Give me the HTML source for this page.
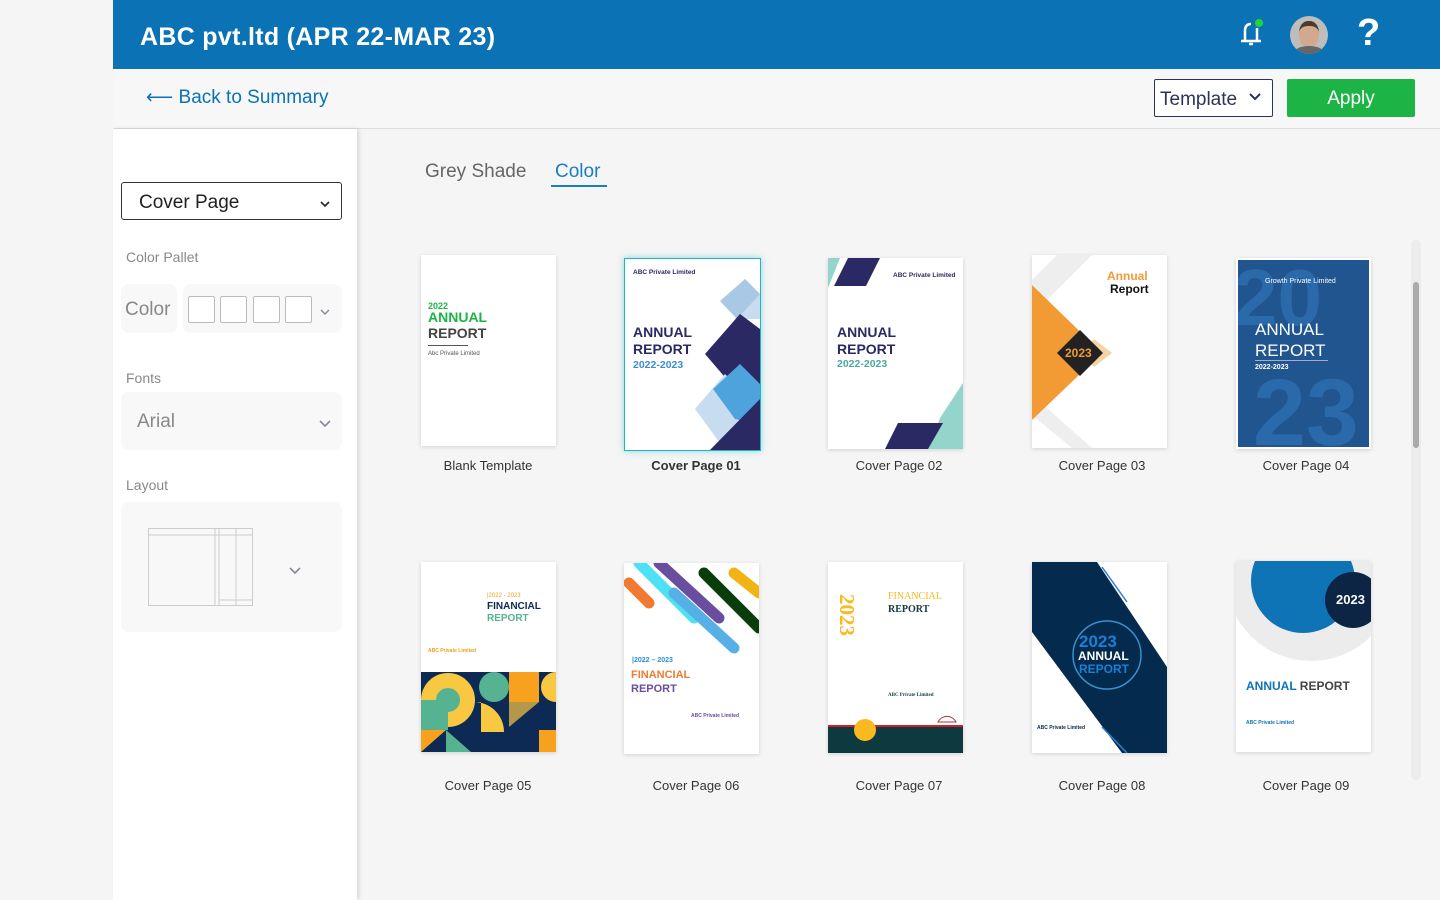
<!DOCTYPE html>
<html><head><meta charset="utf-8"><style>
*{margin:0;padding:0;box-sizing:border-box}
body{width:1440px;height:900px;background:#f5f5f5;font-family:"Liberation Sans",sans-serif;position:relative;overflow:hidden}
.hdr{position:absolute;left:113px;top:0;width:1327px;height:69px;background:#0b72b5}
.hdr h1{position:absolute;left:27px;top:23px;color:#fff;font-size:25px;font-weight:bold;letter-spacing:.3px}
.sub{position:absolute;left:113px;top:69px;width:1327px;height:60px;background:#f7f7f7;border-bottom:1px solid #ddd}
.back{position:absolute;left:33px;top:17px;color:#0b72b5;font-size:19px}
.tpl{position:absolute;left:1041px;top:10px;width:119px;height:38px;border:1px solid #2c3456;border-radius:2px;font-size:19px;color:#2c3456;padding:9px 0 0 5px;background:#fff}
.apply{position:absolute;left:1174px;top:10px;width:128px;height:38px;background:#1db446;border-radius:2px;color:#fff;font-size:19px;text-align:center;padding-top:9px}
.side{position:absolute;left:113px;top:129px;width:244px;height:771px;background:#fff;box-shadow:2px 0 4px rgba(0,0,0,.12)}
.sel{position:absolute;left:8px;top:53px;width:221px;height:38px;border:1px solid #333;border-radius:3px;font-size:19px;color:#222;padding:9px 0 0 17px}
.lbl{position:absolute;left:13px;font-size:14px;color:#888}
.box{position:absolute;background:#f8f8f8;border-radius:8px}
.sw{position:absolute;top:167px;width:27px;height:27px;border:1px solid #bbb;border-radius:2px;background:#fff}
.tab{position:absolute;top:161px;font-size:19px}
.card{position:absolute;background:#fff;box-shadow:0 1px 4px rgba(0,0,0,.15)}
.card svg{display:block}
.cap{position:absolute;width:160px;text-align:center;font-size:13px;color:#333}
.chev{position:absolute}
</style></head><body>
<div class="hdr"><h1>ABC pvt.ltd (APR 22-MAR 23)</h1>
<svg style="position:absolute;left:1124px;top:18px" width="30" height="30" viewBox="0 0 30 30"><path d="M8 22 L8 13 Q8 6 14 6" stroke="#fff" stroke-width="2.5" fill="none"/><path d="M20 10 L20 22" stroke="#fff" stroke-width="2.5"/><path d="M4 23 H24" stroke="#fff" stroke-width="2.5"/><path d="M12 26 H16" stroke="#fff" stroke-width="2.5"/><circle cx="22" cy="5" r="4" fill="#22d43a"/></svg>
<div style="position:absolute;left:1177px;top:16px;width:38px;height:38px;border-radius:50%;background:#bdbdbd;overflow:hidden"><div style="position:absolute;left:9px;top:5px;width:20px;height:26px;border-radius:45%;background:#d2a98f;border-top:5px solid #4a3a30"></div><div style="position:absolute;left:4px;top:30px;width:30px;height:14px;border-radius:50%;background:#666"></div></div>
<div style="position:absolute;left:1244px;top:12px;color:#fff;font-size:38px;font-weight:bold">?</div>
</div>
<div class="sub"><div class="back">⟵ Back to Summary</div>
<div class="tpl">Template</div>
<svg class="chev" style="left:1136px;top:24px" width="12" height="8"><polyline points="1,1 6,6 11,1" fill="none" stroke="#2c3456" stroke-width="2"/></svg>
<div class="apply">Apply</div></div>
<div class="side">
<div class="sel">Cover Page</div>
<svg class="chev" style="left:207px;top:72px" width="10" height="7"><polyline points="1,1 5,5 9,1" fill="none" stroke="#222" stroke-width="1.6"/></svg>
<div class="lbl" style="top:120px">Color Pallet</div>
<div class="box" style="left:8px;top:155px;width:56px;height:49px"></div>
<div style="position:absolute;left:12px;top:170px;font-size:19px;color:#888">Color</div>
<div class="box" style="left:70px;top:155px;width:159px;height:49px"></div>
<div class="sw" style="left:75px"></div><div class="sw" style="left:107px"></div><div class="sw" style="left:140px"></div><div class="sw" style="left:172px"></div>
<svg class="chev" style="left:207px;top:180px" width="10" height="7"><polyline points="1,1 5,5 9,1" fill="none" stroke="#889" stroke-width="1.4"/></svg>
<div class="lbl" style="top:241px">Fonts</div>
<div class="box" style="left:8px;top:263px;width:221px;height:58px"></div>
<div style="position:absolute;left:24px;top:282px;font-size:19px;color:#888">Arial</div>
<svg class="chev" style="left:206px;top:291px" width="12" height="8"><polyline points="1,1 6,6 11,1" fill="none" stroke="#889" stroke-width="1.6"/></svg>
<div class="lbl" style="top:348px">Layout</div>
<div class="box" style="left:8px;top:373px;width:221px;height:130px"></div>
<svg style="position:absolute;left:35px;top:399px" width="106" height="79"><rect x=".5" y=".5" width="104" height="77" fill="none" stroke="#ccc"/><path d="M.5 7H105M67 0V78M71 0V78M88 0V78M71 72H105" stroke="#ccc" fill="none"/></svg>
<svg class="chev" style="left:176px;top:438px" width="12" height="8"><polyline points="1,1 6,6 11,1" fill="none" stroke="#889" stroke-width="1.6"/></svg>
</div>
<div class="tab" style="left:425px;color:#666">Grey Shade</div>
<div class="tab" style="left:555px;color:#1a7fc1">Color</div>
<div style="position:absolute;left:551px;top:185px;width:56px;height:2px;background:#1a7fc1"></div>
<div style="position:absolute;left:1411px;top:240px;width:10px;height:540px;background:#ececec;border-radius:5px"></div>
<div style="position:absolute;left:1413px;top:282px;width:6px;height:166px;background:#aaa;border-radius:3px"></div>

<div class="card" style="left:421px;top:255px"><svg width="135" height="191"><text x="7" y="54" font-size="9" font-weight="bold" fill="#1db446" font-family="Liberation Sans">2022</text><text x="7" y="67" font-size="14" font-weight="bold" fill="#1db446" font-family="Liberation Sans">ANNUAL</text><text x="7" y="83" font-size="14" font-weight="bold" fill="#444" font-family="Liberation Sans">REPORT</text><rect x="7" y="90" width="40" height="1" fill="#555"/><text x="7" y="100" font-size="6" fill="#555" font-family="Liberation Sans">Abc Private Limited</text></svg></div>
<div class="cap" style="left:408px;top:458px">Blank Template</div>

<div class="card" style="left:624px;top:258px;border:1px solid #1fb5c2;box-shadow:0 0 6px rgba(31,181,194,.5)"><svg width="135" height="191"><path d="M120 20L135 35V60L110 60Z" fill="#c7dcef"/><path d="M95 42L120 20L135 35L112 60Z" fill="#a9c8e6"/><path d="M80 95L115 55L135 70V135L110 130Z" fill="#2b2964"/><path d="M70 150L100 115L135 150V191H100Z" fill="#c7dcef"/><path d="M88 130L115 105L135 125V165L110 160Z" fill="#4ea3dc"/><path d="M85 191L135 140V191Z" fill="#2b2964"/><text x="8" y="15" font-size="6.5" font-weight="bold" fill="#2b2964" font-family="Liberation Sans">ABC Private Limited</text><text x="8" y="78" font-size="14" font-weight="bold" fill="#2b2964" font-family="Liberation Sans">ANNUAL</text><text x="8" y="95" font-size="14" font-weight="bold" fill="#2b2964" font-family="Liberation Sans">REPORT</text><text x="8" y="109" font-size="10.5" font-weight="bold" fill="#3a8fd0" font-family="Liberation Sans">2022-2023</text></svg></div>
<div class="cap" style="left:616px;top:458px;font-weight:bold">Cover Page 01</div>

<div class="card" style="left:828px;top:258px"><svg width="135" height="191"><path d="M0 0H12L0 30Z" fill="#93d5cb"/><path d="M20 0H52L38 28H6Z" fill="#2b2964"/><path d="M112 160L135 125V191H100Z" fill="#93d5cb"/><path d="M70 165H115L100 191H57Z" fill="#2b2964"/><text x="65" y="19" font-size="6.5" font-weight="bold" fill="#2b2964" font-family="Liberation Sans">ABC Private Limited</text><text x="9" y="79" font-size="14" font-weight="bold" fill="#2b2964" font-family="Liberation Sans">ANNUAL</text><text x="9" y="96" font-size="14" font-weight="bold" fill="#2b2964" font-family="Liberation Sans">REPORT</text><text x="9" y="109" font-size="10.5" font-weight="bold" fill="#4aa99b" font-family="Liberation Sans">2022-2023</text></svg></div>
<div class="cap" style="left:819px;top:458px">Cover Page 02</div>

<div class="card" style="left:1032px;top:255px"><svg width="135" height="193"><path d="M0 25L25 0H60L0 60Z" fill="#eee"/><path d="M0 140L60 193H40L0 160Z" fill="#eee"/><path d="M0 30L70 98L0 165Z" fill="#f29a33"/><path d="M48 98L62 84L80 98L62 112Z" fill="#f7d3a3"/><path d="M25 98L48 75L71 98L48 121Z" fill="#222"/><text x="33" y="102" font-size="12" font-weight="bold" fill="#f29a33" font-family="Liberation Sans">2023</text><text x="75" y="25" font-size="12" font-weight="bold" fill="#f29a33" font-family="Liberation Sans">Annual</text><text x="78" y="38" font-size="12" font-weight="bold" fill="#111" font-family="Liberation Sans">Report</text></svg></div>
<div class="cap" style="left:1022px;top:458px">Cover Page 03</div>

<div class="card" style="left:1236px;top:258px;padding:2px"><svg width="131" height="187"><rect width="131" height="187" fill="#21558f"/><text x="-5" y="65" font-size="80" font-weight="bold" fill="#2a6aab" font-family="Liberation Sans">20</text><text x="15" y="185" font-size="95" font-weight="bold" fill="#2a6aab" font-family="Liberation Sans">23</text><text x="27" y="23" font-size="7" fill="#fff" font-family="Liberation Sans">Growth Private Limited</text><text x="17" y="75" font-size="17" fill="#fff" font-family="Liberation Sans">ANNUAL</text><text x="17" y="96" font-size="17" fill="#fff" font-family="Liberation Sans">REPORT</text><rect x="17" y="100" width="73" height="1" fill="#aac"/><text x="17" y="109" font-size="7" font-weight="bold" fill="#fff" font-family="Liberation Sans">2022-2023</text></svg></div>
<div class="cap" style="left:1226px;top:458px">Cover Page 04</div>

<div class="card" style="left:421px;top:562px"><svg width="135" height="190"><text x="66" y="35" font-size="6" fill="#e8a21f" font-family="Liberation Sans">|2022 - 2023</text><text x="66" y="47" font-size="10" font-weight="bold" fill="#0d2a54" font-family="Liberation Sans">FINANCIAL</text><text x="66" y="59" font-size="10" font-weight="bold" fill="#56b391" font-family="Liberation Sans">REPORT</text><text x="7" y="90" font-size="5" font-weight="bold" fill="#e8a21f" font-family="Liberation Sans">ABC Private Limited</text><rect x="0" y="110" width="135" height="80" fill="#0d2a54"/><circle cx="27" cy="138" r="27" fill="#f9c843"/><circle cx="27" cy="138" r="12" fill="#56b391"/><rect x="0" y="138" width="27" height="30" fill="#56b391"/><circle cx="73" cy="125" r="15" fill="#56b391"/><rect x="88" y="110" width="30" height="30" fill="#f7a11f"/><circle cx="135" cy="125" r="15" fill="#f9c843"/><path d="M53 140A30 30 0 0 1 83 170H60V140Z" fill="#f9c843"/><path d="M88 140H118L88 165Z" fill="#f9c843" opacity=".7"/><path d="M0 168H25L0 190Z" fill="#f7a11f"/><path d="M25 168L50 190H25Z" fill="#56b391"/><rect x="118" y="168" width="17" height="22" fill="#f7a11f"/></svg></div>
<div class="cap" style="left:408px;top:778px">Cover Page 05</div>

<div class="card" style="left:624px;top:563px"><svg width="135" height="191"><g stroke-linecap="round" stroke-width="11" fill="none"><path d="M5 20L25 40" stroke="#ef7a30"/><path d="M15 0L70 55" stroke="#4ee0f5"/><path d="M50 30L110 85" stroke="#56b0e6"/><path d="M35 0L95 55" stroke="#6a4d9f"/><path d="M80 10L135 65" stroke="#0a3d0a"/><path d="M110 10L135 30" stroke="#f2b316"/></g><text x="8" y="99" font-size="7" font-weight="bold" fill="#2b8fd6" font-family="Liberation Sans">|2022 – 2023</text><text x="7" y="115" font-size="11" font-weight="bold" fill="#ef7a30" font-family="Liberation Sans">FINANCIAL</text><text x="7" y="129" font-size="11" font-weight="bold" fill="#6a4d9f" font-family="Liberation Sans">REPORT</text><text x="67" y="154" font-size="5" font-weight="bold" fill="#6a4d9f" font-family="Liberation Sans">ABC Private Limited</text></svg></div>
<div class="cap" style="left:616px;top:778px">Cover Page 06</div>

<div class="card" style="left:828px;top:562px"><svg width="135" height="191"><text x="60" y="37" font-size="10" fill="#f9b91f" font-family="Liberation Serif">FINANCIAL</text><text x="60" y="50" font-size="10" font-weight="bold" fill="#123b44" font-family="Liberation Serif">REPORT</text><text x="12" y="32" font-size="21" font-weight="bold" fill="#f9b91f" font-family="Liberation Serif" transform="rotate(90 12 32)">2023</text><text x="60" y="134" font-size="5" font-weight="bold" fill="#123b44" font-family="Liberation Serif">ABC Private Limited</text><rect x="0" y="163" width="135" height="2" fill="#d21d2b"/><rect x="0" y="165" width="135" height="26" fill="#0d3a3f"/><circle cx="37" cy="168" r="11" fill="#f9b91f"/><path d="M110 160A10 10 0 0 1 128 160Z" fill="none" stroke="#a33"/></svg></div>
<div class="cap" style="left:819px;top:778px">Cover Page 07</div>

<div class="card" style="left:1032px;top:562px"><svg width="135" height="191"><path d="M0 0H65L135 105V191H90L0 70Z" fill="#042b4d"/><path d="M70 5L95 40" stroke="#2a7fd0" stroke-width="1.5"/><path d="M70 165L95 191" stroke="#2a7fd0" stroke-width="1.5"/><circle cx="75" cy="93" r="34" fill="none" stroke="#3a8fd0" stroke-width="1.5"/><text x="47" y="85" font-size="17" font-weight="bold" fill="#1a7fd6" font-family="Liberation Sans">2023</text><text x="46" y="98" font-size="12" font-weight="bold" fill="#fff" font-family="Liberation Sans">ANNUAL</text><text x="47" y="111" font-size="12" font-weight="bold" fill="#1a7fd6" font-family="Liberation Sans">REPORT</text><text x="5" y="167" font-size="5" font-weight="bold" fill="#042b4d" font-family="Liberation Sans">ABC Private Limited</text></svg></div>
<div class="cap" style="left:1022px;top:778px">Cover Page 08</div>

<div class="card" style="left:1236px;top:561px"><svg width="135" height="191"><circle cx="75" cy="15" r="85" fill="#ececec"/><circle cx="67" cy="20" r="52" fill="#0e74b6"/><circle cx="117" cy="39" r="28" fill="#0c2545"/><text x="100" y="43" font-size="13" font-weight="bold" fill="#fff" font-family="Liberation Sans">2023</text><text x="10" y="129" font-size="12" font-weight="bold" fill="#0e74b6" font-family="Liberation Sans">ANNUAL <tspan fill="#444">REPORT</tspan></text><text x="10" y="163" font-size="5" font-weight="bold" fill="#0e74b6" font-family="Liberation Sans">ABC Private Limited</text></svg></div>
<div class="cap" style="left:1226px;top:778px">Cover Page 09</div>
</body></html>
